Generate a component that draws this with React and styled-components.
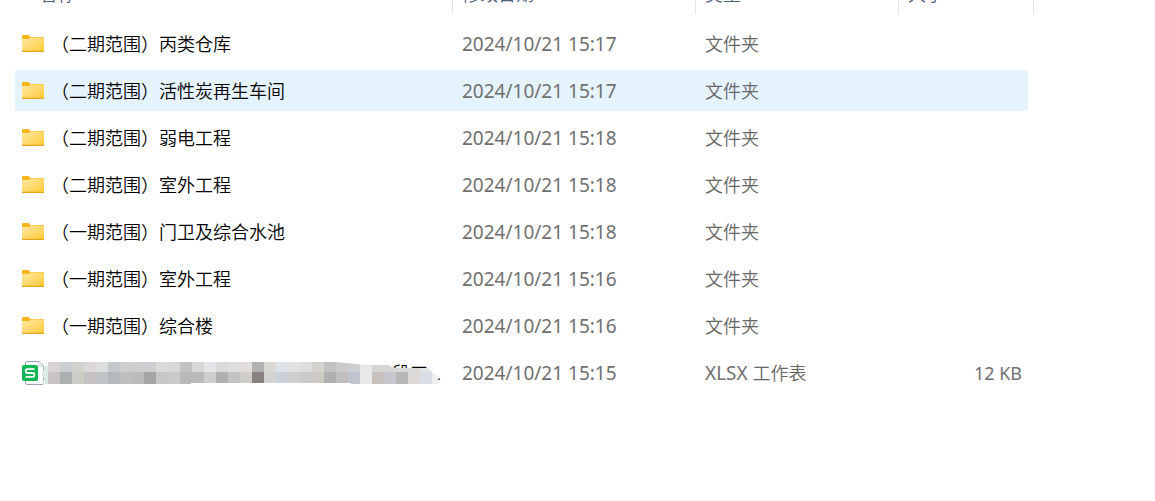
import React from "react";
import styled, { createGlobalStyle } from "styled-components";

const GlobalStyle = createGlobalStyle`
  * { box-sizing: border-box; }
  body {
    margin: 0;
    background: #ffffff;
    font-family: "Noto Sans", "Noto Sans CJK SC", sans-serif;
    font-size: 18px;
    font-weight: 350;
    line-height: 24px;
    color: #666666;
  }
`;

const Viewport = styled.main`
  min-height: 100vh;
  overflow: hidden;
  padding: 0 121px 0 15px;
`;

const FileTable = styled.table`
  display: block;
  margin-top: -27px;
`;

const Head = styled.thead`
  display: block;
  margin-bottom: 9px;
`;

const Body = styled.tbody`
  display: flex;
  flex-direction: column;
  gap: 6px;
  padding-right: 6px;
`;

const Row = styled.tr`
  display: grid;
  grid-template-columns: minmax(0, 1fr) 243px 203px ${(p) => (p.$head ? 135 : 129)}px;
  height: 41px;
  border-radius: 2px;
  background: ${(p) => (p.$active ? "#e5f3ff" : "transparent")};
`;

const HeadCell = styled.th`
  display: flex;
  align-items: center;
  padding: 0 0 0 ${(p) => (p.$first ? 24 : 9)}px;
  border-right: 1px solid #e5e5e5;
  color: #4c607a;
  font-weight: inherit;
`;

const Cell = styled.td`
  display: flex;
  align-items: center;
  justify-content: ${(p) => (p.$end ? "flex-end" : "flex-start")};
  padding: 0 6px 0 9px;
  white-space: pre;
`;

const Latin = styled.span`
  font-size: ${(p) => (p.$small ? 18 : 19)}px;
  font-weight: 400;
  color: #707070;
`;

const NameCell = styled(Cell)`
  position: relative;
  padding: 0 0 0 7px;
  gap: ${(p) => (p.$masked ? 348 : 7)}px;
  color: #000000;
`;

const Icon = styled.svg`
  display: block;
  flex: none;
`;

const Mask = styled.svg`
  position: absolute;
  left: 26px;
  top: 10px;
`;

const FolderIcon = () => (
  <Icon width="22" height="18" viewBox="0 0 22 18" aria-hidden="true">
    <defs>
      <linearGradient id="folder" x1="0" y1="0" x2="1" y2="1">
        <stop offset="0" stopColor="#ffe9a6" />
        <stop offset="1" stopColor="#ffc936" />
      </linearGradient>
    </defs>
    <path d="M0 1Q0 0 1 0H6.5L8.5 2H22V5H0Z" fill="#f7b51c" />
    <path d="M0 4H7L9 2.6H22V16.4Q22 17 21 17H1Q0 17 0 16.4Z" fill="url(#folder)" />
    <path d="M0 15.8H22V16.4Q22 17 21 17H1Q0 17 0 16.4Z" fill="#e5a51f" />
  </Icon>
);

const SheetIcon = () => (
  <Icon width="22" height="24" viewBox="0 0 22 24" aria-hidden="true">
    <path d="M3.5 3V2Q3.5.5 5 .5H17L21.5 5V22Q21.5 23.5 20 23.5H5Q3.5 23.5 3.5 22Z" fill="#fff" stroke="#9aa3b2" />
    <path d="M17 .5V5H21.5" fill="none" stroke="#c3c9d2" />
    <rect x="0" y="4" width="16" height="16" rx="2" fill="#12b556" />
    <path d="M12.5 8.2H5.2Q3.8 8.2 3.8 9.7V10.5Q3.8 12 5.2 12H10.8Q12.3 12 12.3 13.4V14.4Q12.3 15.9 10.8 15.9H3.6" fill="none" stroke="#fff" strokeWidth="1.8" />
  </Icon>
);

const topTiles = [
  "#d9d5d4", "#cbcfd1", "#d2d3cd", "#dcd7d8", "#dee0e0", "#c3c8cd", "#cfcdcb", "#cfcecd",
  "#ccced1", "#dadada", "#d6d7d9", "#c2c2c2", "#d8d7d5", "#e3e5e8", "#dadada", "#dedede",
  "#e1dedd", "#b2b2b2", "#dad9d4", "#dee3ea", "#e2e2e2", "#dedede", "#d4d3cd", "#c2c2c2",
  "#cbcbcd", "#cdd0d3", "#e8e8e8", "#d6d7d5", "#d6d6d6", "#d8d8d8", "#dadada", "#e0e2e5", "#ececf0",
];
const bottomTiles = [
  "#c8c4c4", "#adb0b0", "#cccdc7", "#c6c2c3", "#bfc4c7", "#b4b9bb", "#c0bebc", "#bcbbb9",
  "#a5a5a5", "#c5c8c7", "#c9c9c9", "#b9b9b9", "#bababa", "#cdcdcd", "#b0b0b0", "#c1c3c4",
  "#cfcec9", "#888180", "#d3d3d1", "#c9d0da", "#cfcfcd", "#c8cbc9", "#cecbc4",
  "#b0b0b0", "#c0bfbd", "#bfc4ce", "#e8e8e8", "#c6c1bc", "#c7c7cd", "#b6b8b7", "#ddd9d6", "#d9dde5", "#efeff3",
];

const Mosaic = () => (
  <Mask width="400" height="24" viewBox="0 0 400 24" aria-hidden="true">
    <defs>
      <clipPath id="smear">
        <path d="M7 0H294L306 1L316 2L329 3H347L354 6H387L391 10L397 15V22H310V21H150V22H7Z" />
      </clipPath>
    </defs>
    <path d="M4 4H7V22H1L3 17L1 12Z" fill="#dcece4" />
    <g clipPath="url(#smear)">
      {topTiles.map((fill, i) => (
        <rect key={i} x={7 + i * 12} y="0" width="12" height="10" fill={fill} />
      ))}
      {bottomTiles.map((fill, i) => (
        <rect key={i} x={7 + i * 12} y="10" width="12" height="12" fill={fill} />
      ))}
    </g>
  </Mask>
);

const folders = [
  ["（二期范围）丙类仓库", "2024/10/21 15:17"],
  ["（二期范围）活性炭再生车间", "2024/10/21 15:17"],
  ["（二期范围）弱电工程", "2024/10/21 15:18"],
  ["（二期范围）室外工程", "2024/10/21 15:18"],
  ["（一期范围）门卫及综合水池", "2024/10/21 15:18"],
  ["（一期范围）室外工程", "2024/10/21 15:16"],
  ["（一期范围）综合楼", "2024/10/21 15:16"],
];

export default function App() {
  return (
    <Viewport>
      <GlobalStyle />
      <FileTable>
        <Head>
          <Row $head>
            <HeadCell $first>名称</HeadCell>
            <HeadCell>修改日期</HeadCell>
            <HeadCell>类型</HeadCell>
            <HeadCell>大小</HeadCell>
          </Row>
        </Head>
        <Body>
          {folders.map(([name, date], i) => (
            <Row key={name} $active={i === 1}>
              <NameCell><FolderIcon />{name}</NameCell>
              <Cell><Latin>{date}</Latin></Cell>
              <Cell>文件夹</Cell>
              <Cell $end />
            </Row>
          ))}
          <Row>
            <NameCell $masked><SheetIcon />段工...<Mosaic /></NameCell>
            <Cell><Latin>2024/10/21 15:15</Latin></Cell>
            <Cell><Latin>XLSX </Latin>工作表</Cell>
            <Cell $end><Latin $small>12 KB</Latin></Cell>
          </Row>
        </Body>
      </FileTable>
    </Viewport>
  );
}
